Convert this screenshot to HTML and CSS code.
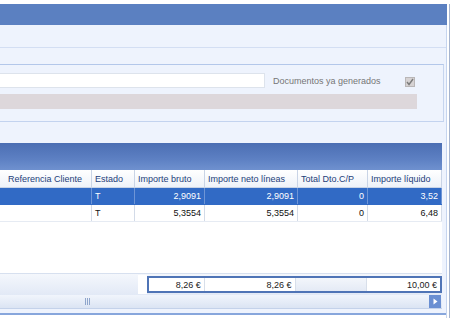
FILE: index.html
```html
<!DOCTYPE html>
<html lang="es">
<head>
    <meta charset="UTF-8">
    <title>Documentos</title>
    <link rel="stylesheet" href="styles.css">
</head>
<body>
    <div class="window">
        <div class="frame">
            <div class="titlebar"></div>
            <div class="panel-top"></div>
            <div class="filters">
                <div class="box">
                    <div class="box-row">
                        <div class="input"></div>
                        <span class="label">Documentos ya generados</span>
                        <span class="check">
                            <svg width="8" height="8" viewBox="0 0 8 8"><path d="M1 4 L3 6.5 L7 1" fill="none" stroke="#7b7b7b" stroke-width="1.4"/></svg>
                        </span>
                    </div>
                    <div class="graybar"></div>
                </div>
            </div>
            <div class="grid">
                <div class="band"></div>
                <div class="cols head">
                    <div class="first">Referencia Cliente</div>
                    <div>Estado</div>
                    <div>Importe bruto</div>
                    <div>Importe neto líneas</div>
                    <div>Total Dto.C/P</div>
                    <div>Importe líquido</div>
                </div>
                <div class="cols row selected">
                    <div class="first"></div>
                    <div>T</div>
                    <div class="num">2,9091</div>
                    <div class="num">2,9091</div>
                    <div class="num">0</div>
                    <div class="num">3,52</div>
                </div>
                <div class="cols row">
                    <div class="first"></div>
                    <div>T</div>
                    <div class="num">5,3554</div>
                    <div class="num">5,3554</div>
                    <div class="num">0</div>
                    <div class="num">6,48</div>
                </div>
                <div class="empty"></div>
                <div class="totals">
                    <div class="blank"></div>
                    <div class="sum-box">
                        <div class="sum s1">8,26 €</div>
                        <div class="sum s2">8,26 €</div>
                        <div class="sum s3"></div>
                        <div class="sum s4">10,00 €</div>
                    </div>
                </div>
                <div class="scroll">
                    <div class="track"><span class="grip"></span></div>
                    <div class="arrow">
                        <svg width="5" height="7" viewBox="0 0 5 7"><path d="M0.5 0.5 L4.5 3.5 L0.5 6.5 Z" fill="#fff"/></svg>
                    </div>
                </div>
            </div>
            <div class="bottom"></div>
        </div>
    </div>
</body>
</html>
```

FILE: styles.css
```css
body, html {
    margin: 0;
    padding: 0;
    background: #fff;
    font-family: "Liberation Sans", Arial, sans-serif;
    font-size: 9px;
}
.window {
    margin-top: 4px;
    width: 450px;
    box-sizing: border-box;
    padding-right: 2px;
    border-right: 1px solid #a5b4cf;
}
.frame {
    width: 447px;
    box-sizing: border-box;
    background: #eef3fd;
    border-right: 1px solid #c6d5ef;
}
.titlebar {
    height: 21px;
    background: #5b80c1;
    margin-right: -1px;
}
.panel-top {
    height: 22px;
    border-bottom: 1px solid #d3def3;
}
.filters {
    height: 95px;
    padding-top: 16px;
    box-sizing: border-box;
}
.box {
    height: 58px;
    box-sizing: border-box;
    border-top: 1px solid #b3c7ea;
    border-bottom: 1px solid #c3d3ef;
    border-right: 1px solid #c6d5ef;
    margin-right: 2px;
    padding-top: 8px;
}
.box-row {
    display: flex;
    align-items: center;
    height: 15px;
}
.input {
    width: 265px;
    height: 15px;
    box-sizing: border-box;
    background: #fff;
    border: 1px solid #dde3ec;
    border-left: none;
}
.label {
    margin-left: 8px;
    width: 132px;
    color: #767676;
}
.check {
    width: 10px;
    height: 10px;
    box-sizing: border-box;
    margin-top: 3px;
    background: #d6d2d3;
    border: 1px solid #b9b6b7;
    display: flex;
    align-items: center;
    justify-content: center;
}
.graybar {
    margin-top: 6px;
    width: 417px;
    height: 15px;
    background: #ddd7db;
}
.grid {
    width: 442px;
}
.band {
    height: 27px;
    background: linear-gradient(180deg, #4b6eb3, #5d80c3 60%, #6f91cf);
}
.cols {
    display: grid;
    grid-template-columns: 92px 43px 70px 93px 70px 74px;
}
.cols div {
    border-right: 1px solid #d3dbe8;
    padding: 0 3px;
    white-space: nowrap;
    overflow: hidden;
    display: flex;
    align-items: center;
}
.cols .first {
    padding-left: 8px;
}
.head {
    height: 18px;
    background: linear-gradient(180deg, #ffffff, #eef2f9);
    border-bottom: 1px solid #c9d4e6;
    box-sizing: border-box;
    color: #24407a;
}
.head div {
    border-right-color: #c9d4e6;
}
.row {
    height: 17px;
    background: #fff;
    color: #111;
    border-bottom: 1px solid #e6ebf3;
    box-sizing: border-box;
}
.row .num {
    justify-content: flex-end;
}
.selected {
    background: #316ac5;
    color: #fff;
    border-bottom-color: #316ac5;
}
.selected div {
    border-right-color: #6e95d6;
}
.empty {
    height: 51px;
    background: #fff;
}
.totals {
    height: 22px;
    background: linear-gradient(180deg, #f4f7fc, #e2e9f6);
    border-top: 1px solid #d7e0ef;
    box-sizing: border-box;
    display: flex;
    align-items: center;
    padding-left: 138px;
}
.blank {
    width: 12px;
    height: 19px;
    background: #fff;
}
.sum-box {
    display: flex;
    height: 17px;
    box-sizing: border-box;
    border: 2px solid #4f74b6;
    width: 295px;
}
.sum {
    display: flex;
    align-items: center;
    justify-content: flex-end;
    padding-right: 3px;
    background: #fff;
    color: #222;
    border-right: 1px solid #d8dfea;
}
.s1 { width: 52px; }
.s2 { width: 87px; }
.s3 { width: 68px; background: linear-gradient(180deg, #f3f6fb, #e4eaf5); }
.s4 { width: 70px; border-right: none; }
.scroll {
    height: 14px;
    display: flex;
    background: linear-gradient(180deg, #f1f5fc, #dbe4f3);
    border-bottom: 1px solid #c4d2ea;
    box-sizing: border-box;
}
.track {
    flex: 1;
    position: relative;
}
.grip {
    position: absolute;
    left: 85px;
    top: 3px;
    width: 5px;
    height: 7px;
    background: repeating-linear-gradient(90deg, #8fa6cc 0 1px, transparent 1px 2px);
}
.arrow {
    width: 12px;
    margin-right: 1px;
    background: #6a8fd2;
    display: flex;
    align-items: center;
    justify-content: center;
}
.bottom {
    height: 9px;
    background: linear-gradient(180deg, #eef3fd 0 4px, #87a6dc 4px 6px, #fff 6px);
}
```
